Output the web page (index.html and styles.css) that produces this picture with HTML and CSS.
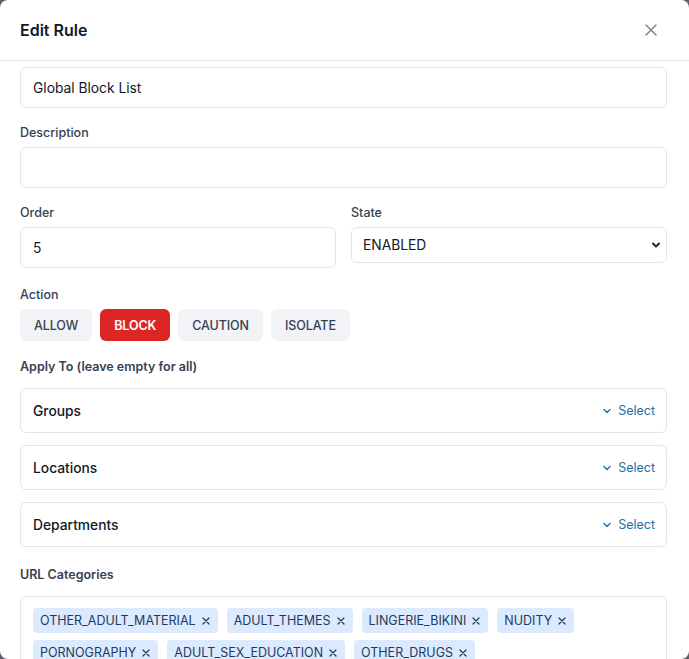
FILE: index.html
```html
<!DOCTYPE html>
<html lang="en">

<head>
  <meta charset="UTF-8">
  <meta name="viewport" content="width=device-width, initial-scale=1.0">
  <title>Edit Rule</title>
  <link rel="stylesheet" href="styles.css">
</head>

<body>
  <div class="modal">
    <header class="modal-header">
      <h2>Edit Rule</h2>
      <button class="close-btn" aria-label="Close">
        <svg width="14" height="14" viewBox="0 0 14 14" fill="none" stroke="currentColor" stroke-width="1.5" stroke-linecap="round">
          <path d="M2 2 L12 12 M12 2 L2 12" />
        </svg>
      </button>
    </header>

    <main class="modal-body">
      <div class="field first">
        <input class="text-input" type="text" value="Global Block List">
      </div>

      <div class="field">
        <label class="label">Description</label>
        <input class="text-input" type="text" value="">
      </div>

      <div class="field row">
        <div class="col">
          <label class="label">Order</label>
          <input class="text-input" type="text" value="5">
        </div>
        <div class="col">
          <label class="label">State</label>
          <div class="select-wrap">
            <select class="select">
              <option>ENABLED</option>
              <option>DISABLED</option>
            </select>
            <svg class="select-caret" width="10" height="10" viewBox="0 0 10 10" fill="none" stroke="currentColor" stroke-width="2" stroke-linecap="round" stroke-linejoin="round">
              <path d="M2 3.5 L5 6.5 L8 3.5" />
            </svg>
          </div>
        </div>
      </div>

      <div class="field action-field">
        <label class="label">Action</label>
        <div class="action-buttons">
          <button class="action">ALLOW</button>
          <button class="action active">BLOCK</button>
          <button class="action">CAUTION</button>
          <button class="action">ISOLATE</button>
        </div>
      </div>

      <div class="field section">
        <div class="section-label">Apply To (leave empty for all)</div>
        <div class="picker-list">
          <div class="picker">
            <span class="picker-title">Groups</span>
            <span class="picker-select">
              <svg width="10" height="10" viewBox="0 0 10 10" fill="none" stroke="currentColor" stroke-width="1.4" stroke-linecap="round" stroke-linejoin="round"><path d="M2 3.5 L5 6.5 L8 3.5" /></svg>
              Select
            </span>
          </div>
          <div class="picker">
            <span class="picker-title">Locations</span>
            <span class="picker-select">
              <svg width="10" height="10" viewBox="0 0 10 10" fill="none" stroke="currentColor" stroke-width="1.4" stroke-linecap="round" stroke-linejoin="round"><path d="M2 3.5 L5 6.5 L8 3.5" /></svg>
              Select
            </span>
          </div>
          <div class="picker">
            <span class="picker-title">Departments</span>
            <span class="picker-select">
              <svg width="10" height="10" viewBox="0 0 10 10" fill="none" stroke="currentColor" stroke-width="1.4" stroke-linecap="round" stroke-linejoin="round"><path d="M2 3.5 L5 6.5 L8 3.5" /></svg>
              Select
            </span>
          </div>
        </div>
      </div>

      <div class="field section categories">
        <div class="section-label">URL Categories</div>
        <div class="tag-box">
          <span class="tag">OTHER_ADULT_MATERIAL <svg class="tag-x" width="8" height="8" viewBox="0 0 8 8"><path d="M1 1 L7 7 M7 1 L1 7" /></svg></span>
          <span class="tag">ADULT_THEMES <svg class="tag-x" width="8" height="8" viewBox="0 0 8 8"><path d="M1 1 L7 7 M7 1 L1 7" /></svg></span>
          <span class="tag">LINGERIE_BIKINI <svg class="tag-x" width="8" height="8" viewBox="0 0 8 8"><path d="M1 1 L7 7 M7 1 L1 7" /></svg></span>
          <span class="tag">NUDITY <svg class="tag-x" width="8" height="8" viewBox="0 0 8 8"><path d="M1 1 L7 7 M7 1 L1 7" /></svg></span>
          <span class="tag">PORNOGRAPHY <svg class="tag-x" width="8" height="8" viewBox="0 0 8 8"><path d="M1 1 L7 7 M7 1 L1 7" /></svg></span>
          <span class="tag">ADULT_SEX_EDUCATION <svg class="tag-x" width="8" height="8" viewBox="0 0 8 8"><path d="M1 1 L7 7 M7 1 L1 7" /></svg></span>
          <span class="tag">OTHER_DRUGS <svg class="tag-x" width="8" height="8" viewBox="0 0 8 8"><path d="M1 1 L7 7 M7 1 L1 7" /></svg></span>
        </div>
      </div>
    </main>
  </div>
</body>

</html>
```

FILE: styles.css
```css
* {
  box-sizing: border-box;
}

html,
body {
  height: 100%;
}

body {
  margin: 0;
  font-family: Inter, "Liberation Sans", sans-serif;
  background: #5b5f66;
  color: #111827;
  overflow: hidden;
}

.modal {
  height: 659px;
  background: white;
  border-radius: 8px;
  overflow: hidden;
  display: flex;
  flex-direction: column;
}

.modal-header {
  height: 61px;
  flex-shrink: 0;
  display: flex;
  align-items: center;
  justify-content: space-between;
  padding: 0 20px;
  border-bottom: 1px solid #e5e7eb;
}

.modal-header h2 {
  margin: 0;
  font-size: 16px;
  font-weight: 600;
  color: #111827;
}

.close-btn {
  background: none;
  border: none;
  padding: 4px;
  margin-right: 7px;
  color: #7b8594;
  display: flex;
  cursor: pointer;
}

.modal-body {
  padding: 6px 22px 0 20px;
  overflow: hidden;
}

.field {
  margin-top: 16px;
}

.field.first {
  margin-top: 0;
}

.label {
  display: block;
  font-size: 12.5px;
  line-height: 18px;
  font-weight: 500;
  color: #374151;
  margin-bottom: 5px;
}

.text-input {
  display: block;
  width: 100%;
  height: 41px;
  padding: 0 12px;
  font-family: inherit;
  font-size: 13.8px;
  color: #111827;
  border: 1px solid #e2e5ea;
  border-radius: 6px;
  background: white;
  outline: none;
}

.row {
  display: grid;
  grid-template-columns: 1fr 1fr;
  gap: 15px;
  align-items: start;
}

.select-wrap {
  position: relative;
}

.select {
  display: block;
  width: 100%;
  height: 36px;
  padding: 0 11px;
  font-family: inherit;
  font-size: 13.8px;
  color: #111827;
  border: 1px solid #e2e5ea;
  border-radius: 6px;
  background: white;
  appearance: none;
  -webkit-appearance: none;
  outline: none;
}

.select-caret {
  position: absolute;
  right: 6px;
  top: 13px;
  color: #1f2937;
  pointer-events: none;
}

.action-field {
  margin-top: 18px;
}

.action-buttons {
  display: flex;
  gap: 8px;
  margin-top: 1px;
}

.action {
  height: 32px;
  padding: 0 14px;
  font-family: inherit;
  font-size: 12.5px;
  font-weight: 500;
  letter-spacing: -0.1px;
  color: #374151;
  background: #f1f3f6;
  border: none;
  border-radius: 6px;
  cursor: pointer;
}

.action.active {
  background: #dc2626;
  color: white;
  font-weight: 600;
}

.section {
  margin-top: 17px;
}

.categories {
  margin-top: 19px;
}

.section-label {
  font-size: 12.5px;
  line-height: 18px;
  font-weight: 600;
  color: #374151;
  margin-bottom: 12px;
}

.picker-list {
  display: flex;
  flex-direction: column;
  gap: 12px;
}

.picker {
  height: 45px;
  display: flex;
  align-items: center;
  justify-content: space-between;
  padding: 0 11px 0 12px;
  border: 1px solid #e2e5ea;
  border-radius: 6px;
}

.picker-title {
  font-size: 13.8px;
  font-weight: 500;
  color: #111827;
}

.picker-select {
  display: flex;
  align-items: center;
  gap: 6px;
  font-size: 12.5px;
  color: #2271a8;
}

.tag-box {
  display: flex;
  flex-wrap: wrap;
  gap: 7px 9px;
  padding: 11px 12px;
  border: 1px solid #e2e5ea;
  border-radius: 6px;
}

.tag {
  display: inline-flex;
  align-items: center;
  gap: 6px;
  height: 25px;
  padding: 0 8px 0 7px;
  font-size: 12.5px;
  color: #1e3a5f;
  background: #dbeafe;
  border-radius: 4px;
}

.tag-x {
  stroke: currentColor;
  stroke-width: 1.2;
  stroke-linecap: round;
  fill: none;
}
```
